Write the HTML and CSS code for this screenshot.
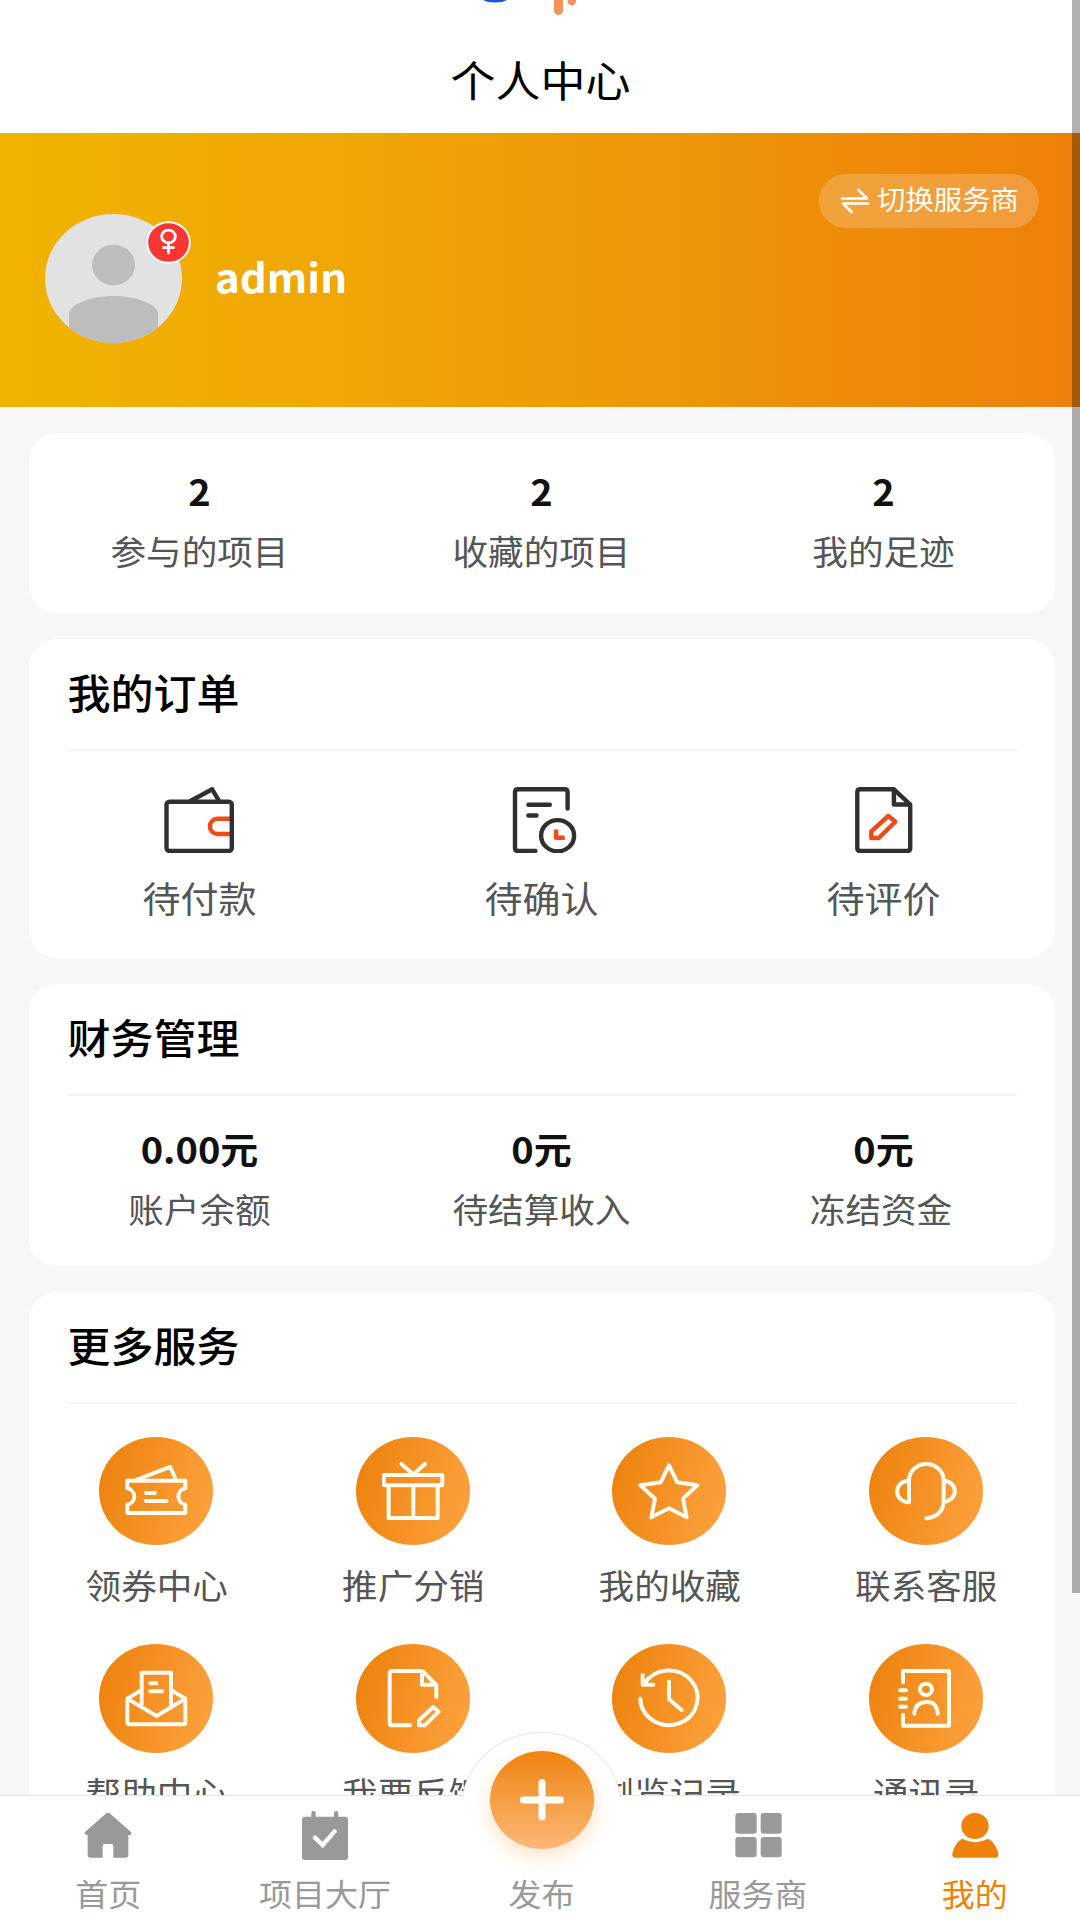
FILE: index.html
```html
<!DOCTYPE html>
<html lang="zh-CN">
<head>
<meta charset="utf-8">
<title>个人中心</title>
<link rel="stylesheet" href="styles.css">
</head>
<body>
<div class="page">
  <div class="content">
    <header class="header">
      <svg class="header-mark" viewBox="0 0 94 18"><path d="M0 0h24q-4 2.500-12 2.500T0 0z" fill="#1d56d8"/><path d="M71 0h9v10.500a4.500 4.500 0 0 1-9 0zM84.500 0h8.500v1a4.250 4.250 0 0 1-8.500 0z" fill="#f3935a"/></svg>
      <h1 class="header-title">个人中心</h1>
    </header>

    <section class="hero">
      <div class="profile">
        <div class="avatar">
          <svg class="avatar-img" viewBox="0 0 137 129"><defs><clipPath id="face"><ellipse cx="68.500" cy="64.500" rx="68.500" ry="64.500"/></clipPath></defs><g clip-path="url(#face)"><path fill="#e2e2e2" d="M0 0h137v129H0z"/><ellipse cx="68.500" cy="51" rx="21.500" ry="20.300" fill="#bdbdbd"/><path d="M24 129v-29c0-9 20-18 44.500-18S113 91 113 100v29z" fill="#bdbdbd"/></g></svg>
          <svg class="gender" viewBox="0 0 45 43"><ellipse cx="22.500" cy="21.500" rx="21.300" ry="20.300" fill="#fb3434" stroke="#fff" stroke-width="2"/><g fill="none" stroke="#fff" stroke-width="2.800" stroke-linecap="round"><ellipse cx="22.500" cy="15.500" rx="6.800" ry="6.400"/><path d="M22.500 21.900v10M17.500 26.700h10"/></g></svg>
        </div>
        <div class="username">admin</div>
      </div>
      <div class="switch">
        <svg class="switch-icon" viewBox="0 0 30 26"><path d="M2 10.500h25L18.500 2M28 15.500H3l8.500 8.500" fill="none" stroke="#fff" stroke-width="2.700" stroke-linecap="round" stroke-linejoin="round"/></svg>
        <span class="switch-text">切换服务商</span>
      </div>
    </section>

    <main class="cards">
      <section class="card card-stats">
        <div class="stat"><div class="num">2</div><div class="label">参与的项目</div></div>
        <div class="stat"><div class="num">2</div><div class="label">收藏的项目</div></div>
        <div class="stat"><div class="num">2</div><div class="label">我的足迹</div></div>
      </section>

      <section class="card card-orders">
        <div class="card-head"><h2>我的订单</h2></div>
        <div class="row">
          <div class="order">
            <svg class="order-icon" viewBox="0 0 72 66"><path class="accent" d="M67.500 31.700H54.500a7.650 7.650 0 0 0 0 15.300h13"/><rect x="3.500" y="14.700" width="65.300" height="49.300" rx="3"/><path d="M27.500 14 49.200 2.300 56 14"/></svg>
            <div class="order-label">待付款</div>
          </div>
          <div class="order">
            <svg class="order-icon" viewBox="0 0 72 66"><path d="M62.600 21.500V5.300q0-3-3-3H13q-3 0-3 3V61q0 3 3 3h17.400M23.400 17.700h21.400M23.400 28.500h8.100"/><ellipse cx="52.600" cy="48.700" rx="16.500" ry="15.600"/><path class="accent" d="M51.100 42.500v8.200h8.600"/></svg>
            <div class="order-label">待确认</div>
          </div>
          <div class="order">
            <svg class="order-icon" viewBox="0 0 72 66"><path d="M46.900 2.300H13.300q-3 0-3 3V61q0 3 3 3h46.900q3 0 3-3V17.500zV17.500h16.300"/><path class="accent" d="M41.300 29l7.100 5.700L31.700 51h-7.400v-6.700z"/></svg>
            <div class="order-label">待评价</div>
          </div>
        </div>
      </section>

      <section class="card card-finance">
        <div class="card-head"><h2>财务管理</h2></div>
        <div class="row">
          <div class="stat"><div class="num">0.00元</div><div class="label">账户余额</div></div>
          <div class="stat"><div class="num">0元</div><div class="label">待结算收入</div></div>
          <div class="stat"><div class="num">0元</div><div class="label frozen">冻结资金</div></div>
        </div>
      </section>

      <section class="card card-services">
        <div class="card-head"><h2>更多服务</h2></div>
        <div class="services">
          <div class="service">
            <div class="disc"><svg viewBox="118 80 343 325"><path d="M203 211H377V234a26 25 0 0 0 0 49V308H203V283a26 25 0 0 0 0-49zM232 208 332 170 348 207M259 248h27M259 272h62"/></svg></div>
            <div class="label">领券中心</div>
          </div>
          <div class="service">
            <div class="disc"><svg viewBox="889 80 343 325"><path d="M973 194h175v31H973zM987 225v98h147v-98M1061 227v94M1025 161l36 31 35-31"/></svg></div>
            <div class="label">推广分销</div>
          </div>
          <div class="service">
            <div class="disc"><svg viewBox="160 80 343 325"><path d="M331 165 356 216 416 225 373 265 384 321 331 294 278 321 289 265 245 225 306 216z"/></svg></div>
            <div class="label">我的收藏</div>
          </div>
          <div class="service">
            <div class="disc"><svg viewBox="928 80 343 325"><path d="M1048 276V210a52 49 0 0 1 104 0V270q0 48-52 54M1048 211a35 32 0 0 0 0 65M1152 211a33 31 0 0 1 0 63"/></svg></div>
            <div class="label">联系客服</div>
          </div>
          <div class="service">
            <div class="disc"><svg viewBox="118 72 343 325"><path d="M246 254V158h88v96M246 210 203 236V307q0 6 6 6H371q6 0 6-6V236L334 210M203 236 291 288 377 236M272 190h18M272 214h36"/></svg></div>
            <div class="label">帮助中心</div>
          </div>
          <div class="service">
            <div class="disc"><svg viewBox="889 72 343 325"><path d="M1052 316H998q-8 0-8-8V161q0-8 8-8h90l42 42v36M1087 153v41h43M1121 261l16 14-42 41h-17v-15z"/></svg></div>
            <div class="label">我要反馈</div>
          </div>
          <div class="service">
            <div class="disc"><svg viewBox="160 72 343 325"><path d="M245 236a86 82 0 1 0 13-46M252 165v29h32M331 185v53l38 32"/></svg></div>
            <div class="label">浏览记录</div>
          </div>
          <div class="service">
            <div class="disc"><svg viewBox="928 72 343 325"><path d="M1030 187V153H1168V317H1030V284M1021 211h18M1021 236h18M1021 260h18M1064 281q2-33 35-35t35 35"/><ellipse cx="1099" cy="208" rx="18" ry="17"/></svg></div>
            <div class="label">通讯录</div>
          </div>
        </div>
      </section>
    </main>
  </div>

  <nav class="tabbar">
    <div class="publish-halo"></div>
    <div class="tab">
      <svg class="tab-icon" viewBox="73 573 144 150"><path d="M140 580q5-4 10 0L214 636q5 9-8 9V705q0 8-8 8H161V679q0-7-7-7h-18q-7 0-7 7v34H92q-8 0-8-8V645q-12 0-8-9z"/></svg>
      <div class="tab-label">首页</div>
    </div>
    <div class="tab">
      <svg class="tab-icon" viewBox="723 573 144 150"><rect x="754" y="573" width="13" height="30" rx="6"/><rect x="822" y="573" width="13" height="30" rx="6"/><rect x="726" y="590" width="138" height="130" rx="9"/><path d="M765 653l23 22 36-41" fill="none" stroke="#fff" stroke-width="13" stroke-linecap="round"/></svg>
      <div class="tab-label">项目大厅</div>
    </div>
    <div class="tab tab-publish">
      <div class="tab-icon"></div>
      <div class="tab-label">发布</div>
      <div class="publish"><svg viewBox="0 0 44 42"><path d="M22 3.500v34.500M3.500 21h37" fill="none" stroke="#fff" stroke-width="7" stroke-linecap="round"/></svg></div>
    </div>
    <div class="tab">
      <svg class="tab-icon" viewBox="523 573 144 150"><rect x="527" y="579" width="64" height="62" rx="9"/><rect x="603" y="579" width="63" height="62" rx="9"/><rect x="527" y="651" width="64" height="61" rx="9"/><rect x="603" y="651" width="63" height="61" rx="9"/></svg>
      <div class="tab-label">服务商</div>
    </div>
    <div class="tab active">
      <svg class="tab-icon" viewBox="1174 573 144 150"><ellipse cx="1246" cy="618" rx="41" ry="39"/><path d="M1202 659q8-4 14 1 30 13 61 0 6-5 14-1 20 17 25 43 1 11-9 11H1187q-11 0-9-11 5-26 24-43z"/></svg>
      <div class="tab-label">我的</div>
    </div>
  </nav>
  <div class="scrollbar"></div>
</div>
</body>
</html>
```
FILE: styles.css
```css
* { box-sizing: border-box; }

body {
  margin: 0;
  font-family: "Noto Sans CJK SC", "Noto Sans", sans-serif;
  background: #fff;
  color: #000;
}

svg { display: block; }

.page {
  position: relative;
  display: flex;
  flex-direction: column;
  width: 1080px;
  height: 1920px;
  overflow: hidden;
  background: #f7f7f7;
}

.content {
  width: 1083px;
  height: 1795px;
  overflow: hidden;
}

.header-title, .username, .switch-text, .num, .label, .order-label, .card-head h2, .tab-label {
  transform: scaleY(.945);
  white-space: nowrap;
}

.header {
  display: flex;
  flex-direction: column;
  align-items: center;
  height: 133px;
  background: #fff;
}

.header-mark {
  width: 94px;
  height: 18px;
  margin-right: 23px;
}

.header-title {
  margin: 31px 2px 0 0;
  font-size: 45px;
  font-weight: 400;
  line-height: 60px;
}

.hero {
  display: flex;
  justify-content: space-between;
  height: 274px;
  padding: 41px 44px 0 45px;
  background: linear-gradient(90deg, #f0b400 0%, #f0a405 35%, #ee930a 65%, #ee800a 100%);
  color: #fff;
}

.profile {
  display: flex;
  align-items: center;
  gap: 33px;
  height: 129px;
  margin-top: 40px;
}

.avatar {
  position: relative;
  width: 137px;
  height: 129px;
}

.avatar-img {
  width: 137px;
  height: 129px;
}

.gender {
  position: absolute;
  top: 7px;
  left: 101px;
  width: 45px;
  height: 43px;
}

.username {
  margin-bottom: 5px;
  font-size: 42px;
  font-weight: 700;
  line-height: 60px;
}

.switch {
  display: flex;
  align-items: center;
  gap: 7px;
  width: 220px;
  height: 54px;
  padding-left: 21px;
  border-radius: 27px;
  background: rgba(255, 255, 255, .2);
}

.switch-icon {
  width: 30px;
  height: 26px;
}

.switch-text {
  margin-top: -4px;
  font-size: 28.4px;
  line-height: 40px;
}

.cards {
  display: flex;
  flex-direction: column;
  gap: 26px;
  padding: 26px 28.5px 0;
}

.card {
  border-radius: 28px / 27px;
  background: #fff;
}

.card-stats {
  display: grid;
  grid-template-columns: repeat(3, 1fr);
  height: 180px;
  padding-top: 34px;
}

.card-orders { height: 319px; }
.card-finance { height: 282px; }
.card-services { height: 640px; }

.card-head {
  display: flex;
  align-items: center;
  height: 112px;
  margin: 0 38px 0 39px;
  border-bottom: 2px solid #f4f4f4;
}

.card-head h2 {
  margin: 0 0 6px;
  font-size: 43px;
  font-weight: 500;
  line-height: 56px;
}

.row {
  display: grid;
  grid-template-columns: repeat(3, 1fr);
}

.stat {
  display: flex;
  flex-direction: column;
  align-items: center;
  gap: 14px;
}

.card-finance .row { padding-top: 29px; }

.num {
  font-size: 38px;
  font-weight: 700;
  line-height: 48px;
  color: #111;
}

.label {
  font-size: 35.6px;
  line-height: 44px;
  color: #555;
}

.label.frozen { margin-right: 5px; }

.order {
  display: flex;
  flex-direction: column;
  align-items: center;
  gap: 21px;
  padding-top: 36px;
}

.order-icon {
  width: 72px;
  height: 66px;
  margin-right: 2px;
  fill: none;
  stroke: #303030;
  stroke-width: 4.4;
  stroke-linecap: round;
  stroke-linejoin: round;
}

.order-icon .accent {
  stroke: #ee4a1a;
  stroke-linecap: butt;
}

.order-label {
  font-size: 38px;
  line-height: 48px;
  color: #555;
}

.services {
  display: grid;
  grid-template-columns: repeat(4, 1fr);
  grid-auto-rows: 207.4px;
  padding-top: 33px;
}

.service {
  display: flex;
  flex-direction: column;
  align-items: center;
  gap: 18px;
}

.disc {
  width: 114.3px;
  height: 108.3px;
  margin-right: 1px;
  border-radius: 50%;
  background: linear-gradient(105deg, #ed820d 5%, #fea23e 95%);
}

.disc svg {
  width: 114.3px;
  height: 108.3px;
  fill: none;
  stroke: #fffdf2;
  stroke-width: 12;
  stroke-linecap: round;
  stroke-linejoin: round;
}

.tabbar {
  position: relative;
  display: grid;
  grid-template-columns: repeat(5, 1fr);
  width: 1083px;
  height: 125px;
  border-top: 1px solid #e6e6e6;
  background: #fff;
}

.tab {
  position: relative;
  display: flex;
  flex-direction: column;
  align-items: center;
  gap: 10px;
  padding-top: 15px;
  fill: #999;
  color: #999;
}

.tab.active {
  fill: #ee8208;
  color: #ee8208;
}

.tab-icon {
  width: 48px;
  height: 50px;
}

.tab-label {
  font-size: 33px;
  line-height: 44px;
}

.publish-halo {
  position: absolute;
  top: -64px;
  left: 461px;
  width: 161px;
  height: 152px;
  border: 1px solid #e6e6e6;
  border-radius: 50%;
  background: #fff;
  clip-path: inset(0 0 87px 0);
}

.publish {
  position: absolute;
  top: -45px;
  left: 57px;
  display: grid;
  place-items: center;
  width: 104px;
  height: 98px;
  border-radius: 50%;
  background: linear-gradient(180deg, #ee840f, #fdb878);
  box-shadow: 0 6px 20px rgba(254, 165, 80, .35);
}

.publish svg {
  width: 44px;
  height: 42px;
}

.scrollbar {
  position: absolute;
  top: 0;
  right: 0;
  width: 8px;
  height: 1593px;
  background: rgba(0, 0, 0, .3);
}
```
